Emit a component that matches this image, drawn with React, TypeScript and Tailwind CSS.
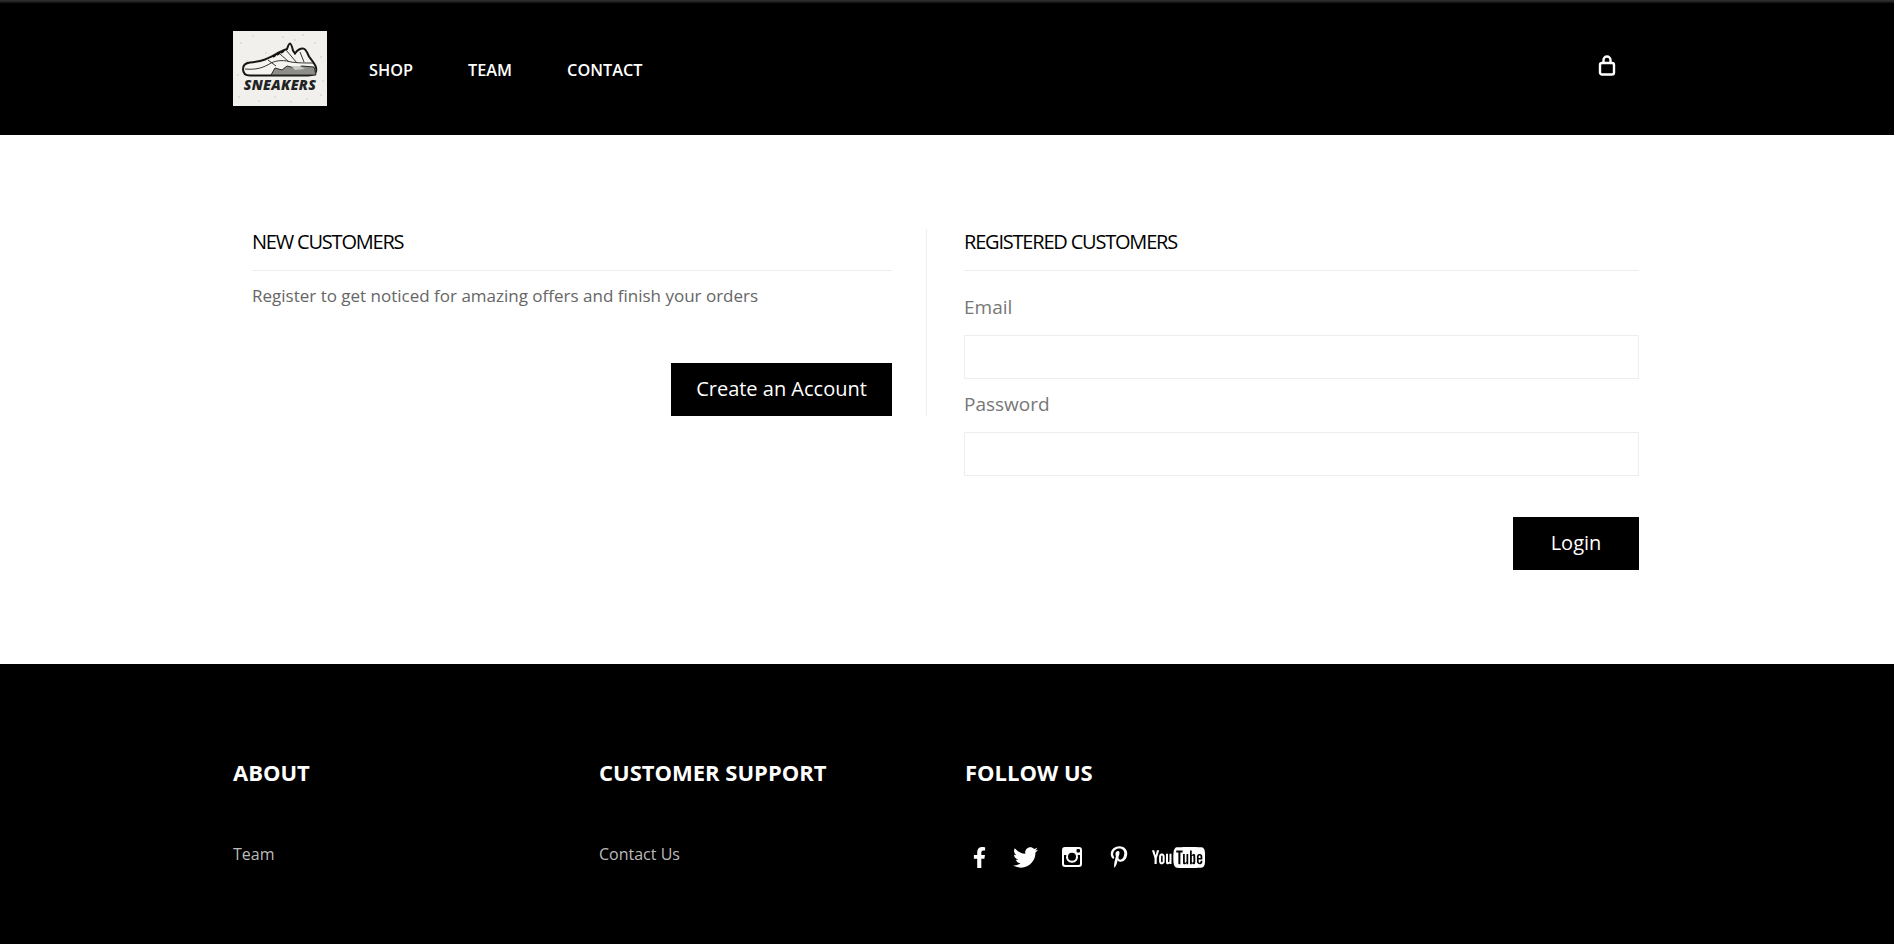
import { FaFacebookF, FaTwitter, FaPinterestP } from "react-icons/fa";
import { ImYoutube2 } from "react-icons/im";

const font = "font-['Open_Sans','Noto_Sans',sans-serif]";

const specks = [
  [8, 12], [20, 5], [33, 22], [14, 30], [5, 44], [70, 4], [82, 12], [88, 26], [62, 9],
  [90, 50], [6, 66], [26, 70], [42, 66], [58, 71], [74, 68], [88, 64], [50, 6],
];

function Logo() {
  return (
    <div className="relative w-[94px] h-[75px] bg-[#f1f0ec] flex flex-col items-center pt-[11px]">
      <svg className="absolute inset-0" width="94" height="75" viewBox="0 0 94 75">
        {specks.map(([x, y]) => (
          <circle key={`${x}-${y}`} cx={x} cy={y} r="1.1" fill="#dcdbd6" />
        ))}
      </svg>
      <svg className="relative" width="76" height="36" viewBox="0 0 76 36" fill="none">
        <path
          d="M1 27c0-4 3-6 7-6.500 6-.5 10-1 15-3 5-2 10-5 15-7.500 3-1.500 5-2.500 7-3 1-3 2-5.500 3-5.500s2 3 3 7l2 3c2-3 5-5 8-5 3 0 4 4 6 8 2 3 6 7 7 11 .6 2.500 0 6-2 7-1 .6-3 1-6 1H8c-4 0-7-2-7-6.500z"
          fill="#f5f4f0"
          stroke="#161616"
          strokeWidth="2"
        />
        <path d="M3 27c11 1 18-1 26-6 6-3 14-3 20-1 6 1 14 1 22 1" stroke="#333" strokeWidth="1" />
        <path d="M29 33l4-7 7 2 5-4 8 2 7-2 12 1 2 8z" fill="#8d8d8a" stroke="#2a2a2a" strokeWidth="1" />
        <path d="M38 12l9 8M44 8l11 13M58 10l4 10M26 18l8 6" stroke="#333" strokeWidth="1" />
        <path d="M31 15l3-2M35 13l3-2M39 11l3-2" stroke="#111" strokeWidth="1.6" />
        <path d="M49 24l9 0 5 3-10 1z" fill="#c9c9c6" />
      </svg>
      <span className="relative font-['Open_Sans',sans-serif] font-extrabold italic text-[14px] leading-[14px] text-[#222] tracking-[0.3px]">
        SNEAKERS
      </span>
    </div>
  );
}

function Bag() {
  return (
    <svg width="18" height="21" viewBox="0 0 18 21" fill="none" stroke="white" strokeWidth="2.4">
      <rect x="2" y="8" width="14" height="11.5" rx="2" />
      <path d="M5.5 8V5a3.500 3.500 0 0 1 7 0v3" />
    </svg>
  );
}

function Instagram() {
  return (
    <svg width="20" height="20" viewBox="0 0 20 20">
      <path
        fillRule="evenodd"
        fill="white"
        d="M3 0h14a3 3 0 0 1 3 3v14a3 3 0 0 1-3 3H3a3 3 0 0 1-3-3V3a3 3 0 0 1 3-3zm12.500 2a1 1 0 0 0-1 1v1.500a1 1 0 0 0 1 1H17a1 1 0 0 0 1-1V3a1 1 0 0 0-1-1zM2 8v8.500A1.500 1.500 0 0 0 3.500 18h13a1.500 1.500 0 0 0 1.500-1.500V8h-2.300a6 6 0 1 1-11.400 0zm8-2.200a4 4 0 1 0 0 8 4 4 0 0 0 0-8z"
      />
    </svg>
  );
}

function Field({ label }: { label: string }) {
  return (
    <div>
      <label className="block text-[19px] leading-[26px] text-[#777] mb-[15px]">{label}</label>
      <input className="block w-full h-[44px] border border-[#eeeeee] bg-white rounded-none" />
    </div>
  );
}

export default function App() {
  return (
    <div className={`${font} bg-white h-[944px] overflow-hidden flex flex-col`}>
      <div className="h-[3px] bg-gradient-to-b from-[#333] to-[#111]" />
      <header className="bg-black h-[132px] pl-[233px] pr-[233px] flex">
        <div className="pt-[28px]">
          <Logo />
        </div>
        <nav className="flex gap-[55px] ml-[42px] mt-[55px] h-[24px] text-[16.3px] leading-[24px] font-semibold text-white">
          <a>SHOP</a>
          <a>TEAM</a>
          <a>CONTACT</a>
        </nav>
        <div className="ml-auto mr-[45px] mt-[52px]">
          <Bag />
        </div>
      </header>

      <main className="h-[529px] pl-[252px] pr-[255px] pt-[94px] flex items-start">
        <section className="w-[640px] h-[187px]">
          <h2 className="text-[20px] leading-[24px] tracking-[-1.2px] text-black pb-[16px] pt-[1px] border-b border-[#eeeeee]">
            NEW CUSTOMERS
          </h2>
          <p className="text-[17px] leading-[24px] text-[#666] mt-[13px]">
            Register to get noticed for amazing offers and finish your orders
          </p>
          <div className="flex justify-end mt-[55px]">
            <button className="h-[53px] w-[221px] pb-[1px] bg-black text-white text-[20px]">Create an Account</button>
          </div>
        </section>
        <div className="w-px h-[187px] bg-[#eeeeee] ml-[34px] mr-[37px]" />
        <section className="flex-1">
          <h2 className="text-[20px] leading-[24px] tracking-[-1.2px] text-black pb-[16px] pt-[1px] border-b border-[#eeeeee]">
            REGISTERED CUSTOMERS
          </h2>
          <div className="mt-[23px] flex flex-col gap-[12px]">
            <Field label="Email" />
            <Field label="Password" />
          </div>
          <div className="flex justify-end mt-[41px]">
            <button className="h-[53px] w-[126px] pb-[2px] bg-black text-white text-[20px]">Login</button>
          </div>
        </section>
      </main>

      <footer className="bg-black flex-1 pl-[233px] pt-[93px] flex text-white">
        <div className="w-[366px]">
          <h3 className="text-[22px] leading-[30px] font-bold">ABOUT</h3>
          <a className="block mt-[55px] text-[16px] leading-[24px] text-[#bbb]">Team</a>
        </div>
        <div className="w-[366px]">
          <h3 className="text-[22px] leading-[30px] font-bold">CUSTOMER SUPPORT</h3>
          <a className="block mt-[55px] text-[16px] leading-[24px] text-[#bbb]">Contact Us</a>
        </div>
        <div>
          <h3 className="text-[22px] leading-[30px] font-bold">FOLLOW US</h3>
          <div className="flex items-center mt-[58px] h-[24px] gap-[18px] text-white">
            <span className="w-[28px] flex justify-center"><FaFacebookF size={21} /></span>
            <span className="w-[28px] flex justify-center"><FaTwitter size={25} /></span>
            <span className="w-[28px] flex justify-center ml-[1px]"><Instagram /></span>
            <span className="w-[28px] flex justify-center ml-[1px]"><FaPinterestP size={22} /></span>
            <span className="ml-[1px]"><ImYoutube2 size={53} /></span>
          </div>
        </div>
      </footer>
    </div>
  );
}
